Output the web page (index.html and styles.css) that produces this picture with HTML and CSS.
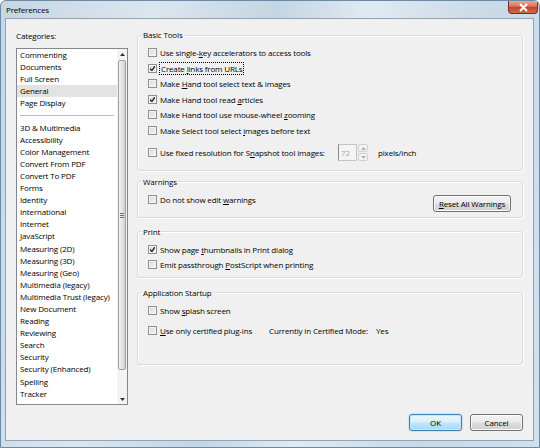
FILE: index.html
```html
<!DOCTYPE html>
<html lang="en">

<head>
  <meta charset="UTF-8">
  <title>Preferences</title>
  <link rel="stylesheet" href="styles.css">
</head>

<body>
  <div class="window">
    <div class="titlebar">
      <span class="title">Preferences</span>
      <div class="close-btn">
        <svg width="11" height="9" viewBox="0 0 11 9">
          <path d="M2 1 L9 8 M9 1 L2 8" stroke="#fff" stroke-width="2" />
        </svg>
      </div>
    </div>

    <div class="client">
      <div class="main">
        <!-- category list -->
        <div class="sidebar">
          <div class="sidebar-label">Cate<u>g</u>ories:</div>
          <div class="listbox">
            <ul class="items">
              <li>Commenting</li>
              <li>Documents</li>
              <li>Full Screen</li>
              <li class="selected">General</li>
              <li>Page Display</li>
              <li class="separator"><span></span></li>
              <li>3D &amp; Multimedia</li>
              <li>Accessibility</li>
              <li>Color Management</li>
              <li>Convert From PDF</li>
              <li>Convert To PDF</li>
              <li>Forms</li>
              <li>Identity</li>
              <li>International</li>
              <li>Internet</li>
              <li>JavaScript</li>
              <li>Measuring (2D)</li>
              <li>Measuring (3D)</li>
              <li>Measuring (Geo)</li>
              <li>Multimedia (legacy)</li>
              <li>Multimedia Trust (legacy)</li>
              <li>New Document</li>
              <li>Reading</li>
              <li>Reviewing</li>
              <li>Search</li>
              <li>Security</li>
              <li>Security (Enhanced)</li>
              <li>Spelling</li>
              <li>Tracker</li>
              <li>Trust Manager</li>
            </ul>
            <div class="scrollbar">
              <div class="scroll-arrow">
                <svg width="5" height="3" viewBox="0 0 5 3"><path d="M0 3 L2.5 0 L5 3 Z" fill="#333" /></svg>
              </div>
              <div class="scroll-thumb">
                <div class="grip"></div>
              </div>
              <div class="scroll-track"></div>
              <div class="scroll-arrow">
                <svg width="5" height="3" viewBox="0 0 5 3"><path d="M0 0 L2.5 3 L5 0 Z" fill="#333" /></svg>
              </div>
            </div>
          </div>
        </div>

        <!-- settings groups -->
        <div class="panels">
          <fieldset class="group basic-tools">
            <legend>Basic Tools</legend>
            <div class="check-row"><span class="checkbox"></span><span>Use single-<u>k</u>ey accelerators to access tools</span></div>
            <div class="check-row"><span class="checkbox checked"></span><span class="focused">Create <u>l</u>inks from URLs</span></div>
            <div class="check-row"><span class="checkbox"></span><span>Make <u>H</u>and tool select text &amp; images</span></div>
            <div class="check-row"><span class="checkbox checked"></span><span>Make Hand tool read <u>a</u>rticles</span></div>
            <div class="check-row"><span class="checkbox"></span><span>Make Hand tool use mouse-wheel <u>z</u>ooming</span></div>
            <div class="check-row"><span class="checkbox"></span><span>Make Select tool select <u>i</u>mages before text</span></div>
            <div class="snapshot-row">
              <div class="check-row snapshot-label"><span class="checkbox"></span><span>Use fixed resolution for S<u>n</u>apshot tool images:</span></div>
              <div class="spinner">
                <div class="spin-input">72</div>
                <div class="spin-buttons">
                  <div class="spin-btn"><svg width="5" height="3" viewBox="0 0 5 3"><path d="M0 3 L2.5 0 L5 3 Z" fill="#b0b0b0" /></svg></div>
                  <div class="spin-btn"><svg width="5" height="3" viewBox="0 0 5 3"><path d="M0 0 L2.5 3 L5 0 Z" fill="#b0b0b0" /></svg></div>
                </div>
              </div>
              <span class="unit">pixels/inch</span>
            </div>
          </fieldset>

          <fieldset class="group warnings">
            <legend>Warnings</legend>
            <div class="warnings-row">
              <div class="check-row"><span class="checkbox"></span><span>Do not show edit <u>w</u>arnings</span></div>
              <button class="btn reset-btn"><u>R</u>eset All Warnings</button>
            </div>
          </fieldset>

          <fieldset class="group print">
            <legend>Print</legend>
            <div class="check-row"><span class="checkbox checked"></span><span>Show page <u>t</u>humbnails in Print dialog</span></div>
            <div class="check-row"><span class="checkbox"></span><span>Emit passthrough <u>P</u>ostScript when printing</span></div>
          </fieldset>

          <fieldset class="group startup">
            <legend>Application Startup</legend>
            <div class="check-row"><span class="checkbox"></span><span>Show <u>s</u>plash screen</span></div>
            <div class="check-row certified-row">
              <span class="checkbox"></span><span class="certified-label"><u>U</u>se only certified plug-ins</span>
              <span class="mode-label">Currently in Certified Mode:</span>
              <span>Yes</span>
            </div>
          </fieldset>
        </div>
      </div>

      <div class="footer">
        <button class="btn default-btn">OK</button>
        <button class="btn">Cancel</button>
      </div>
    </div>
  </div>
</body>

</html>
```

FILE: styles.css
```css
body {
  margin: 0;
  font-family: 'Open Sans', 'Noto Sans', sans-serif;
  font-size: 8px;
  letter-spacing: -0.15px;
  color: #000;
  background: #fff;
}

u {
  text-decoration-thickness: 1px;
  text-underline-offset: 1px;
}

.window {
  width: 540px;
  height: 448px;
  box-sizing: border-box;
  border: 1px solid #6a8aa6;
  border-radius: 6px 6px 0 0;
  background: linear-gradient(100deg, #c7d6e4 0%, #dbe6ef 25%, #c4d5e3 45%, #e0eaf2 60%, #c9d9e6 80%, #d2e0ec 100%);
  display: flex;
  flex-direction: column;
  overflow: hidden;
}

/* title bar */
.titlebar {
  height: 17px;
  display: flex;
  justify-content: space-between;
  padding-left: 5px;
}

.title {
  line-height: 17px;
}

.close-btn {
  width: 30px;
  height: 13px;
  margin-right: 1px;
  box-sizing: border-box;
  border: 1px solid #7a2d22;
  border-top: none;
  border-radius: 0 0 4px 4px;
  background: linear-gradient(#eaa896 0%, #d8735f 45%, #c2432b 50%, #d06a52 100%);
  display: flex;
  align-items: center;
  justify-content: center;
}

/* dialog body */
.client {
  height: 423px;
  box-sizing: border-box;
  margin: 0 5px 0 4px;
  border: 1px solid #8aa4ba;
  background: #f0f0f0;
  padding: 0 10px;
}

.main {
  display: flex;
  gap: 9px;
  height: 386px;
}

.sidebar {
  width: 112px;
  padding-top: 11px;
}

.sidebar-label {
  line-height: 12px;
  margin-bottom: 6px;
}

.listbox {
  height: 357px;
  box-sizing: border-box;
  border: 1px solid #828790;
  background: #fff;
  display: flex;
}

.items {
  flex: 1;
  margin: 0;
  padding: 0;
  list-style: none;
  overflow: hidden;
}

.items li {
  height: 12.1px;
  line-height: 12px;
  padding-left: 3px;
  white-space: nowrap;
}

.items li.selected {
  background: #e3e3e3;
}

.items li.separator {
  display: flex;
  align-items: center;
}

.separator span {
  flex: 1;
  margin-right: 3px;
  border-top: 1px solid #a9c0c8;
}

.scrollbar {
  width: 10px;
  background: #f3f3f3;
  display: flex;
  flex-direction: column;
}

.scroll-arrow {
  height: 10px;
  display: flex;
  align-items: center;
  justify-content: center;
}

.scroll-thumb {
  height: 310px;
  margin: 1px 1px 0 1px;
  box-sizing: border-box;
  border: 1px solid #a0a0a0;
  border-radius: 2px;
  background: linear-gradient(90deg, #f2f2f2, #e4e4e4 50%, #d2d2d2);
  display: flex;
  align-items: center;
  justify-content: center;
}

.grip {
  width: 4px;
  height: 5px;
  background: repeating-linear-gradient(#707070 0 1px, transparent 1px 2px);
}

.scroll-track {
  flex: 1;
}

/* group boxes */
.panels {
  width: 386px;
  padding-top: 10px;
}

.group {
  margin: 0;
  padding: 4px 10px 0 10px;
  border: 1px solid #d4dce2;
  border-radius: 3px;
  box-shadow: inset 1px 1px 0 #fff, 1px 1px 0 #fff;
}

.group legend {
  line-height: 12px;
  padding: 0 1px;
  margin-left: -6px;
}

.basic-tools {
  padding-bottom: 7px;
}

.warnings {
  margin-top: 5px;
  padding-bottom: 5px;
}

.print {
  margin-top: 8px;
  padding-bottom: 4px;
}

.startup {
  margin-top: 9px;
  padding-bottom: 25px;
}

.check-row {
  height: 15.5px;
  display: flex;
  align-items: center;
  white-space: nowrap;
}

.checkbox {
  width: 9px;
  height: 9px;
  box-sizing: border-box;
  margin-right: 3px;
  border: 1px solid #8e8f8f;
  background: linear-gradient(135deg, #d6d6d6, #f8f8f8);
  box-shadow: inset 0 0 0 1px #f4f4f4;
  flex-shrink: 0;
}

.checkbox.checked {
  background: url("data:image/svg+xml,%3Csvg xmlns='http://www.w3.org/2000/svg' width='7' height='7'%3E%3Cpath d='M1 3.5 L2.8 5.6 L6 1' stroke='%23202a40' stroke-width='1.4' fill='none'/%3E%3C/svg%3E") center no-repeat, linear-gradient(135deg, #d6d6d6, #f8f8f8);
}

.focused {
  outline: 1px dotted #000;
  outline-offset: 0;
  line-height: 11px;
  padding: 0 1px;
}

.snapshot-row {
  margin-top: 4.5px;
  height: 20px;
  display: flex;
  align-items: center;
}

.snapshot-label {
  width: 190px;
}

.spinner {
  display: flex;
  height: 17px;
  margin-right: 10px;
}

.spin-input {
  width: 19px;
  box-sizing: border-box;
  border: 1px solid #c4c4c4;
  border-left-color: #8a8a8a;
  background: #f4f4f4;
  color: #a8a8a8;
  line-height: 15px;
  padding-left: 2px;
}

.spin-buttons {
  width: 10px;
  display: flex;
  flex-direction: column;
  gap: 1px;
  margin-left: 1px;
}

.spin-btn {
  flex: 1;
  border: 1px solid #d0d0d0;
  border-radius: 2px;
  background: #f4f4f4;
  display: flex;
  align-items: center;
  justify-content: center;
}

.warnings-row {
  display: flex;
  justify-content: space-between;
  align-items: flex-start;
}

.reset-btn {
  width: 78px;
  margin-top: 3px;
  margin-right: 1px;
}

.certified-row {
  margin-top: 5px;
}

.certified-label {
  width: 109px;
}

.mode-label {
  width: 107px;
}

/* buttons */
.btn {
  height: 17px;
  box-sizing: border-box;
  font-family: inherit;
  font-size: 8px;
  letter-spacing: inherit;
  color: #000;
  padding: 0;
  border: 1px solid #707070;
  border-radius: 3px;
  background: linear-gradient(#f3f3f3 0%, #ebebeb 48%, #dddddd 52%, #cfcfcf 100%);
  box-shadow: inset 0 0 0 1px #fcfcfc;
}

.footer {
  margin-top: 9px;
  display: flex;
  justify-content: flex-end;
  gap: 8px;
}

.footer .btn {
  width: 53px;
}

.default-btn {
  border-color: #3c7fb1;
  background: linear-gradient(#eaf6fd 0%, #d9f0fc 48%, #bee6fd 52%, #a7d9f5 100%);
  box-shadow: inset 0 0 0 1px #c6e9fc, 0 0 2px #7fc4ee;
}
```
